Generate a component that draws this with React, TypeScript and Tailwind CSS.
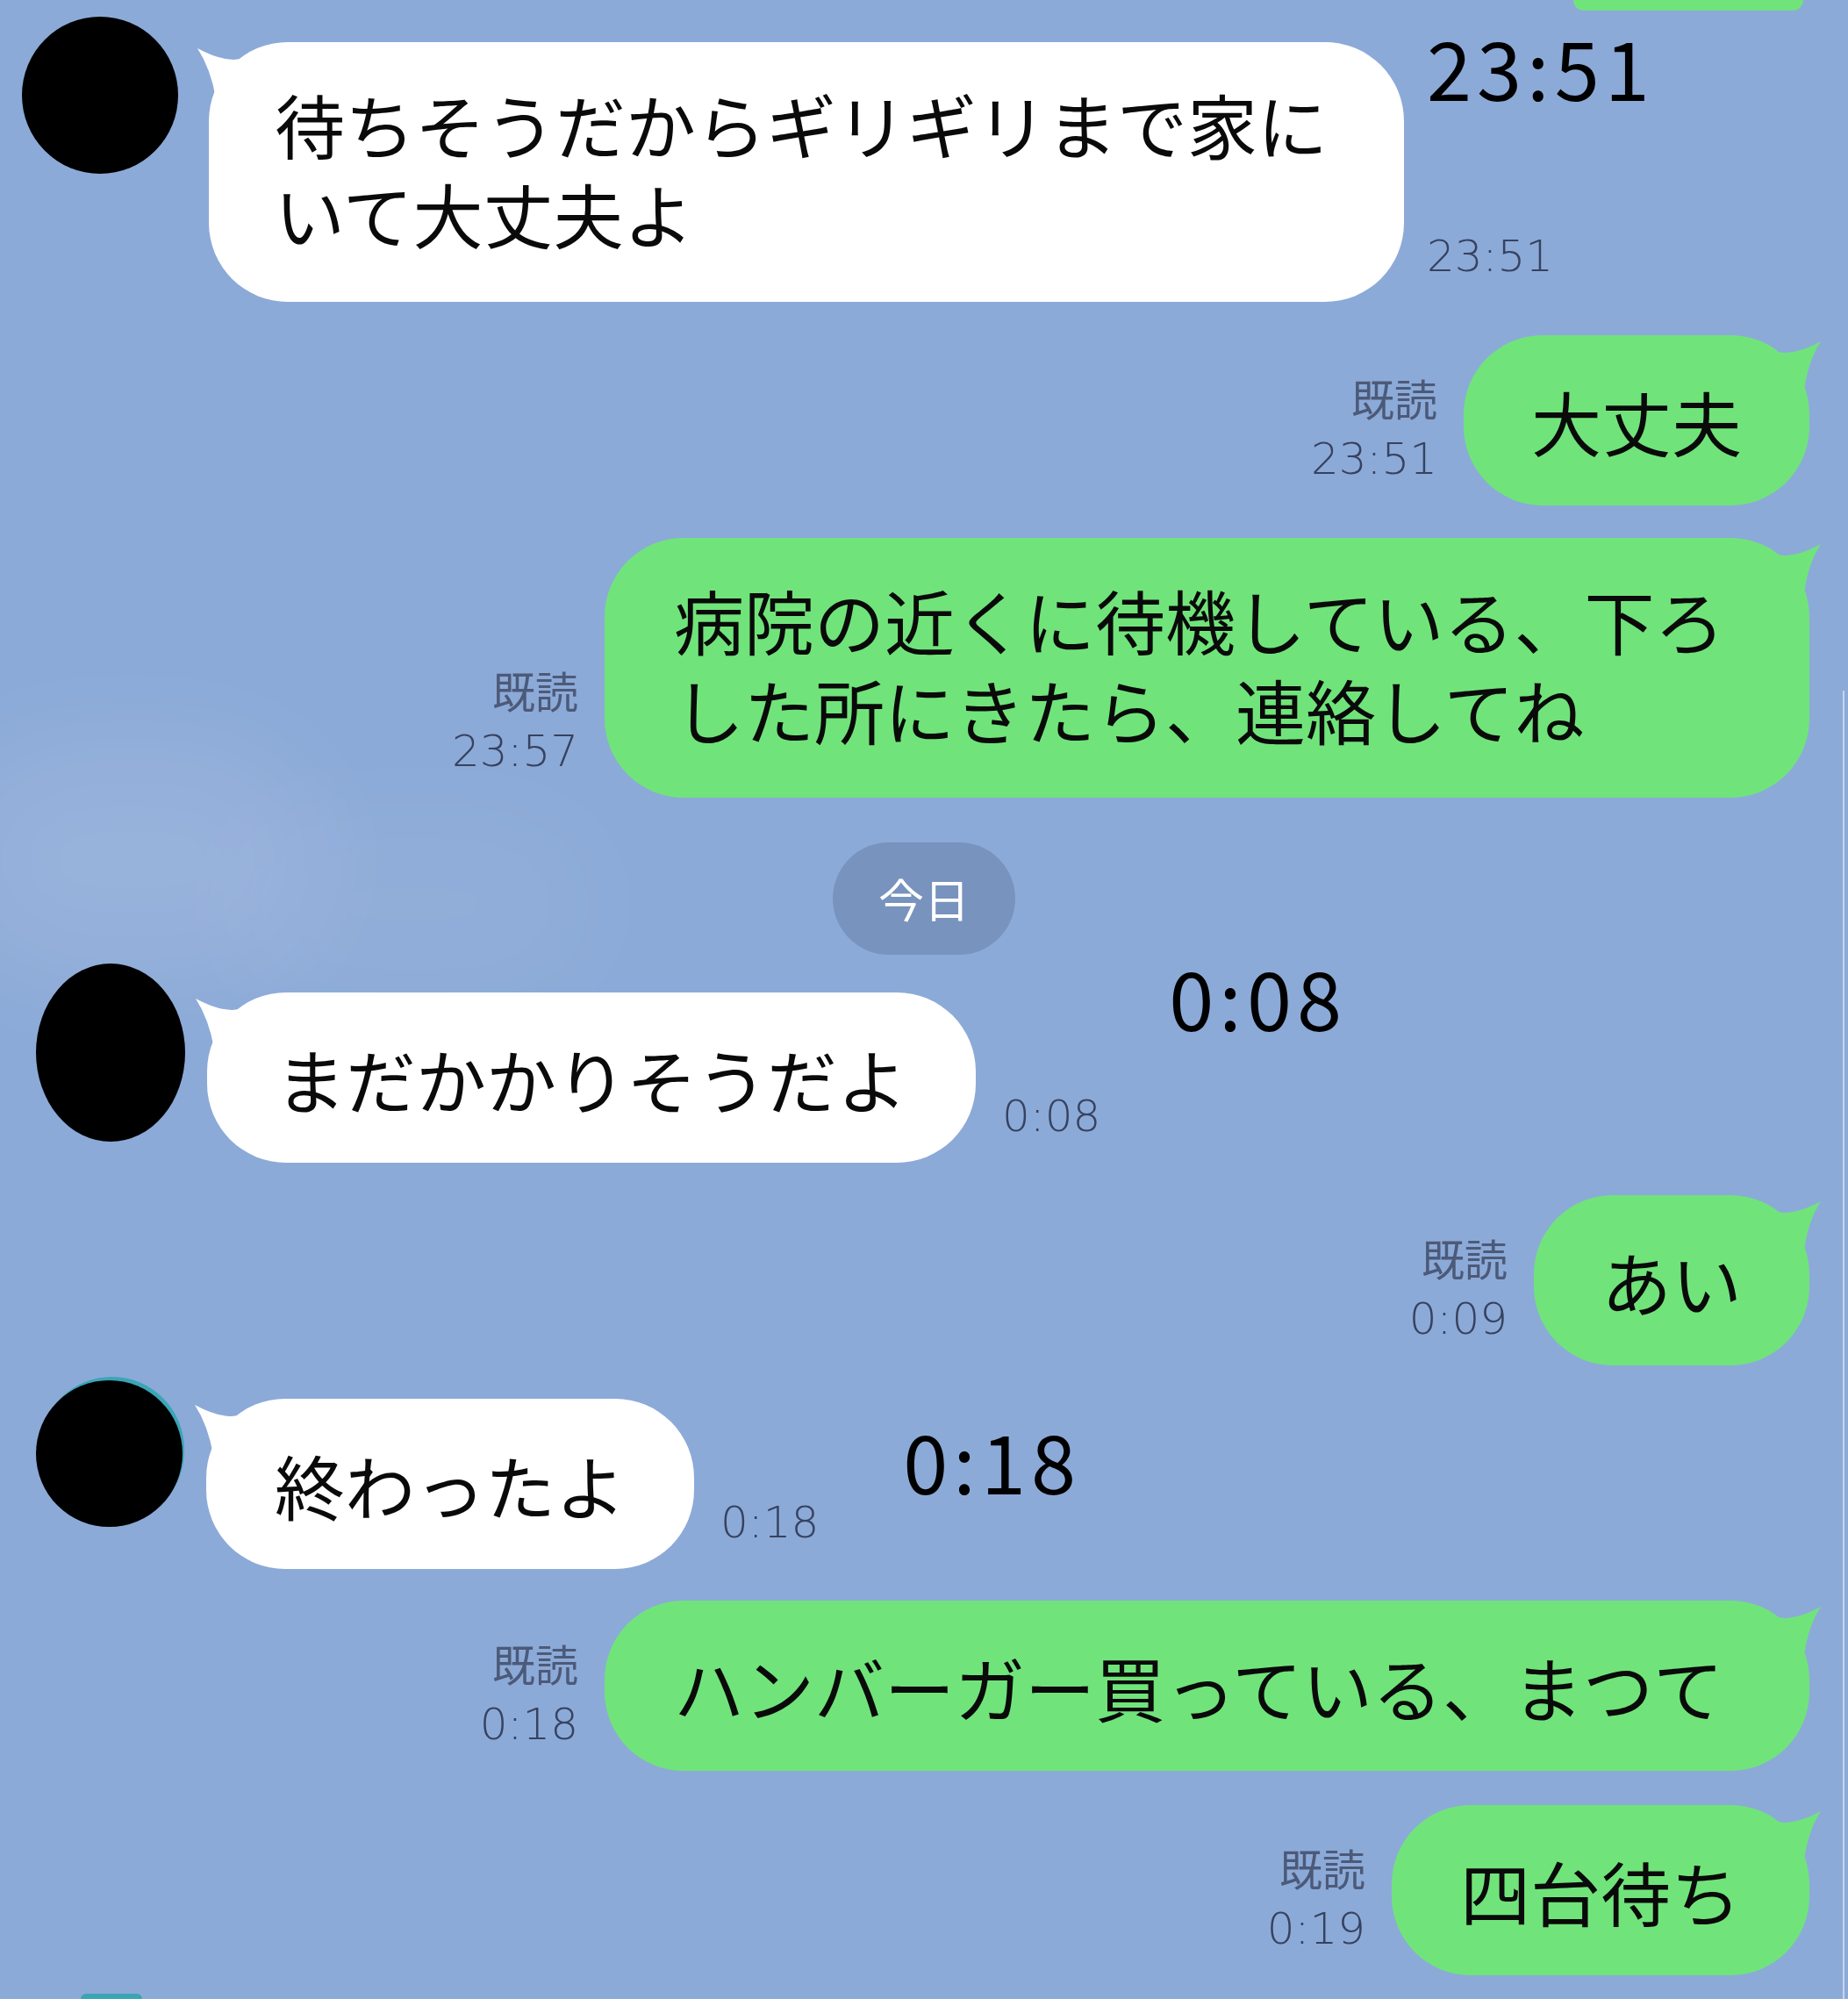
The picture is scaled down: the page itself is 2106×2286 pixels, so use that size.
import React from 'react';

const jp = "font-['Noto_Sans_CJK_JP',sans-serif]";
const meta = "font-['DejaVu_Sans',sans-serif] font-extralight text-[50px] leading-[70px] text-[#36425f]";
const bigTime = "font-['Noto_Sans_CJK_JP',sans-serif] text-[92px] leading-none tracking-[6px] text-black";
const msgText = "font-['Noto_Sans_CJK_JP',sans-serif] text-[80px] leading-[102px] text-[#0a0a0a]";

// little horn at the top right of my own bubbles
function GreenTail() {
  return (
    <svg className="absolute top-0 -right-[16px] h-[64px] w-[60px]" viewBox="0 0 60 64">
      <path d="M0 17 Q22 26 57 7 Q42 30 38 64 L0 64 Z" fill="#70e47a" />
    </svg>
  );
}

function WhiteTail() {
  return (
    <svg className="absolute top-0 -left-[16px] h-[64px] w-[60px]" viewBox="0 0 60 64">
      <path d="M60 17 Q38 26 3 7 Q18 30 24 64 L60 64 Z" fill="#ffffff" />
    </svg>
  );
}

function ReadMeta({ time }: { time: string }) {
  return (
    <div className="mb-[18px] flex flex-col items-end">
      <span className={`${jp} text-[49px] leading-[70px] text-[#4c5a79]`}>既読</span>
      <span className={meta}>{time}</span>
    </div>
  );
}

function Sent({ children, time, className = '', pad = 'py-[46px]' }: { children: React.ReactNode; time: string; className?: string; pad?: string }) {
  return (
    <div className={`flex items-end justify-end gap-[30px] pr-[44px] ${className}`}>
      <ReadMeta time={time} />
      <div className={`relative rounded-[90px] bg-[#70e47a] ${pad} ${msgText}`}>
        <GreenTail />
        <div className="relative">{children}</div>
      </div>
    </div>
  );
}

function Received({ children, className = '' }: { children: React.ReactNode; className?: string }) {
  return (
    <div className={`relative rounded-[90px] bg-white ${msgText} ${className}`}>
      <WhiteTail />
      <div className="relative">{children}</div>
    </div>
  );
}

export default function App() {
  return (
    <div className="relative isolate flex h-[2286px] w-full flex-col overflow-hidden bg-[#8caad8]">
      {/* faint clouds in the wallpaper */}
      <div className="absolute left-[-60px] top-[850px] -z-10 h-[260px] w-[420px] rounded-full bg-white/10 blur-3xl" />
      <div className="absolute left-[260px] top-[930px] -z-10 h-[200px] w-[420px] rounded-full bg-white/5 blur-3xl" />
      <div className="absolute right-[4px] top-[787px] bottom-[8px] w-[2px] bg-white/50" />

      {/* tail end of the previous bubble */}
      <div className="mr-[51px] h-[12px] w-[262px] self-end rounded-b-[40px] bg-[#70e47a]" />

      {/* 23:51 them */}
      <div className="mt-[7px] flex pl-[25px]">
        <div className="h-[179px] w-[178px] shrink-0 rounded-[50%] bg-black" />
        <Received className="ml-[35px] mt-[29px] w-[1362px] pb-[51px] pl-[75px] pt-[41px]">
          待ちそうだからギリギリまで家に
          <br />
          いて大丈夫よ
        </Received>
        <div className="ml-[26px] flex flex-col justify-between pb-[17px] pt-[10px]">
          <span className={bigTime}>23:51</span>
          <span className={meta}>23:51</span>
        </div>
      </div>

      <Sent time="23:51" className="mt-[38px]">
        <div className="px-[77px]">大丈夫</div>
      </Sent>

      <Sent time="23:57" className="mt-[37px]" pad="pt-[41px] pb-[51px]">
        <div className="w-[1373px] pl-[79px]">
          病院の近くに待機している、下ろ
          <br />
          した所にきたら、連絡してね
        </div>
      </Sent>

      <div className="mt-[51px] flex h-[128px] w-[208px] items-center justify-center self-center rounded-full bg-[#7893bd]">
        <span className={`${jp} text-[52px] text-white`}>今日</span>
      </div>

      {/* 0:08 them */}
      <div className="mt-[10px] flex pl-[41px]">
        <div className="h-[203px] w-[170px] shrink-0 rounded-[50%] bg-black" />
        <Received className="ml-[25px] mt-[33px] px-[78px] py-[46px]">まだかかりそうだよ</Received>
        <span className={`ml-[30px] mb-[18px] self-end ${meta}`}>0:08</span>
        <span className={`ml-[78px] -mt-[9px] self-start ${bigTime}`}>0:08</span>
      </div>

      <Sent time="0:09" className="mt-[37px]">
        <div className="px-[77px]">あい</div>
      </Sent>

      {/* 0:18 them */}
      <div className="mt-[17px] flex pl-[41px]">
        <div className="relative h-[167px] w-[167px] shrink-0">
          <div className="absolute -top-[4px] left-[4px] h-[167px] w-[165px] rounded-full bg-[#3aa5b5]" />
          <div className="absolute inset-0 rounded-[50%] bg-black" />
        </div>
        <Received className="ml-[27px] mt-[21px] px-[78px] py-[46px]">終わったよ</Received>
        <span className={`ml-[30px] mb-[18px] self-end ${meta}`}>0:18</span>
        <span className={`ml-[96px] mt-[44px] self-start ${bigTime}`}>0:18</span>
      </div>

      <Sent time="0:18" className="mt-[36px]">
        <div className="w-[1373px] pl-[79px]">ハンバーガー買っている、まつて</div>
      </Sent>

      <Sent time="0:19" className="mt-[39px]">
        <div className="px-[78px]">四台待ち</div>
      </Sent>

      <div className="mt-auto">
        <div className="ml-[92px] h-[6px] w-[70px] rounded-t-full bg-[#3aa5b5]" />
        <div className="h-[8px] bg-white" />
      </div>
    </div>
  );
}
